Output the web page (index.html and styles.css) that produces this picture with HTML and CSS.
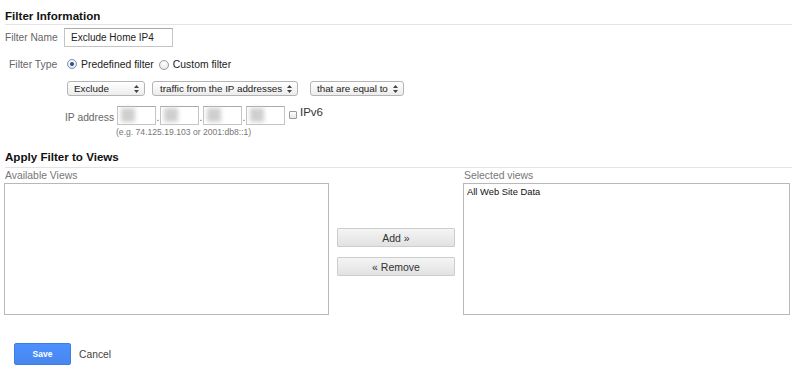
FILE: index.html
```html
<!DOCTYPE html>
<html lang="en">
<head>
  <meta charset="UTF-8" />
  <meta name="viewport" content="width=device-width, initial-scale=1.0"/>
  <title>Filter Information</title>
  <link rel="stylesheet" href="styles.css">
</head>
<body>
  <div class="page">
    <h2 class="section-title">Filter Information</h2>

    <div class="row name-row">
      <label class="field-label" for="filter-name">Filter Name</label>
      <input type="text" id="filter-name" class="text-input" value="Exclude Home IP4"/>
    </div>

    <div class="row type-row">
      <span class="field-label">Filter Type</span>
      <span class="radio checked"></span>
      <span class="radio-text">Predefined filter</span>
      <span class="radio second"></span>
      <span class="radio-text">Custom filter</span>
    </div>

    <div class="row select-row">
      <div class="select sel-exclude">
        <span>Exclude</span>
        <svg class="arrows" width="5" height="8" viewBox="0 0 5 8"><path d="M2.5 0L5 3H0z M2.5 8L0 5h5z" fill="#444"/></svg>
      </div>
      <div class="select sel-traffic">
        <span>traffic from the IP addresses</span>
        <svg class="arrows" width="5" height="8" viewBox="0 0 5 8"><path d="M2.5 0L5 3H0z M2.5 8L0 5h5z" fill="#444"/></svg>
      </div>
      <div class="select sel-equal">
        <span>that are equal to</span>
        <svg class="arrows" width="5" height="8" viewBox="0 0 5 8"><path d="M2.5 0L5 3H0z M2.5 8L0 5h5z" fill="#444"/></svg>
      </div>
    </div>

    <div class="row ip-row">
      <span class="field-label">IP address</span>
      <div class="ip-box"><span class="blur"></span></div>
      <span class="dot">.</span>
      <div class="ip-box"><span class="blur"></span></div>
      <span class="dot">.</span>
      <div class="ip-box"><span class="blur"></span></div>
      <span class="dot">.</span>
      <div class="ip-box"><span class="blur"></span></div>
      <span class="checkbox"></span>
      <span class="ipv6">IPv6</span>
    </div>
    <div class="hint">(e.g. 74.125.19.103 or 2001:db8::1)</div>

    <h2 class="section-title second">Apply Filter to Views</h2>

    <div class="views">
      <div class="view-col available">
        <div class="col-label">Available Views</div>
        <div class="list-box"></div>
      </div>
      <div class="move-buttons">
        <button class="move">Add &raquo;</button>
        <button class="move">&laquo; Remove</button>
      </div>
      <div class="view-col selected">
        <div class="col-label">Selected views</div>
        <div class="list-box">
          <div class="list-item">All Web Site Data</div>
        </div>
      </div>
    </div>

    <div class="actions">
      <button class="save">Save</button>
      <a class="cancel" href="#">Cancel</a>
    </div>
  </div>
</body>
</html>
```

FILE: styles.css
```css
body {
  margin: 0;
  font-family: "Liberation Sans", Arial, sans-serif;
  color: #222;
  background: #fff;
}

.page {
  width: 788px;
  padding-left: 4px;
}

.section-title {
  font-size: 11.6px;
  font-weight: bold;
  line-height: 14px;
  margin: 9px 0 0 1px;
  padding-bottom: 1px;
  border-bottom: 1px solid #e3e3e3;
  color: #111;
}

.section-title.second {
  margin-top: 13px;
  margin-left: 1px;
  padding-bottom: 3px;
}

.row {
  display: flex;
  align-items: center;
}

.field-label {
  font-size: 10.2px;
  color: #666;
}

/* filter name */
.name-row {
  margin-top: 3px;
}

.name-row .field-label {
  width: 59px;
  margin-left: 1px;
}

.text-input {
  box-sizing: border-box;
  width: 109px;
  height: 19px;
  margin: 0;
  padding: 0 6px;
  border: 1px solid #c4c4c4;
  border-top-color: #a9a9a9;
  font-family: inherit;
  font-size: 10px;
  color: #222;
}

/* filter type */
.type-row {
  margin-top: 10px;
  height: 14px;
}

.type-row .field-label {
  width: 58px;
  padding-left: 5px;
  font-size: 10.4px;
}

.radio {
  box-sizing: border-box;
  width: 10px;
  height: 10px;
  border-radius: 50%;
  border: 1px solid #9a9a9a;
  background: radial-gradient(circle at 50% 30%, #fff, #e2e2e2);
  position: relative;
  margin-top: -1px;
}

.radio.checked {
  border-color: #7d8fa8;
  background: radial-gradient(circle at 50% 30%, #fff, #d7e3f2);
}

.radio.checked::after {
  content: "";
  position: absolute;
  left: 2px;
  top: 2px;
  width: 4px;
  height: 4px;
  border-radius: 50%;
  background: #2b4f80;
}

.radio.second {
  margin-left: 5px;
  margin-top: 2px;
}

.radio-text {
  font-size: 10.4px;
  color: #222;
  margin-left: 4px;
}

/* selects */
.select-row {
  margin-top: 10px;
  padding-left: 63px;
}

.select {
  box-sizing: border-box;
  height: 15px;
  display: flex;
  align-items: center;
  justify-content: space-between;
  padding: 0 5px 0 6px;
  border: 1px solid #b4b4b4;
  border-radius: 3px;
  background: linear-gradient(#ffffff, #ececec);
  font-size: 9.8px;
  color: #222;
  white-space: nowrap;
}

.arrows {
  flex-shrink: 0;
}

.sel-exclude {
  width: 78px;
}

.sel-traffic {
  width: 146px;
  margin-left: 7px;
  padding-left: 7px;
}

.sel-equal {
  width: 94px;
  margin-left: 12px;
}

/* ip address */
.ip-row {
  margin-top: 10px;
  padding-left: 61px;
  align-items: flex-start;
  height: 19px;
}

.ip-row .field-label {
  width: 52px;
  line-height: 19px;
  padding-top: 2px;
  font-size: 10.3px;
}

.ip-box {
  box-sizing: border-box;
  width: 39px;
  height: 19px;
  border: 1px solid #c4c4c4;
  border-top-color: #a9a9a9;
  background: #fff;
  padding: 1px 0 0 3px;
}

.blur {
  display: block;
  width: 14px;
  height: 14px;
  background: #cfcfcf;
  filter: blur(2px);
}

.dot {
  width: 4px;
  text-align: center;
  font-size: 10px;
  line-height: 19px;
  padding-top: 2px;
  color: #555;
}

.checkbox {
  box-sizing: border-box;
  width: 8px;
  height: 8px;
  margin: 5px 0 0 4px;
  border: 1px solid #9a9a9a;
  border-radius: 1px;
  background: linear-gradient(#fff, #e6e6e6);
}

.ipv6 {
  margin: -3px 0 0 3px;
  line-height: 19px;
  font-size: 11.5px;
  color: #333;
}

.hint {
  margin: 2px 0 0 112px;
  font-size: 8.6px;
  line-height: 10px;
  color: #777;
}

/* views */
.views {
  display: flex;
}

.view-col.available {
  width: 325px;
}

.view-col.selected {
  width: 327px;
}

.col-label {
  margin: 2px 0 1px 1px;
  font-size: 10.4px;
  line-height: 12px;
  color: #777;
}

.list-box {
  box-sizing: border-box;
  height: 132px;
  border: 1px solid #b8b8b8;
  background: #fff;
  padding: 2px 3px;
}

.list-item {
  font-size: 9.4px;
  line-height: 12px;
  color: #111;
}

.move-buttons {
  width: 118px;
  margin: 0 8px;
  padding-top: 60px;
  display: flex;
  flex-direction: column;
  gap: 10px;
}

.move {
  box-sizing: border-box;
  height: 19px;
  margin: 0;
  padding: 0;
  border: 1px solid #cdcdcd;
  border-radius: 1px;
  background: linear-gradient(#f4f4f4, #e2e2e2);
  font-family: inherit;
  font-size: 10.5px;
  color: #333;
}

/* actions */
.actions {
  display: flex;
  align-items: center;
  margin: 28px 0 0 10px;
}

.save {
  box-sizing: border-box;
  width: 57px;
  height: 22px;
  margin: 0;
  border: 1px solid #3b7ee6;
  border-radius: 2px;
  background: linear-gradient(#4d90fe, #4787ed);
  color: #fff;
  font-family: inherit;
  font-weight: bold;
  font-size: 8.5px;
}

.cancel {
  margin-left: 8px;
  font-size: 10.3px;
  color: #444;
  text-decoration: none;
}
```
